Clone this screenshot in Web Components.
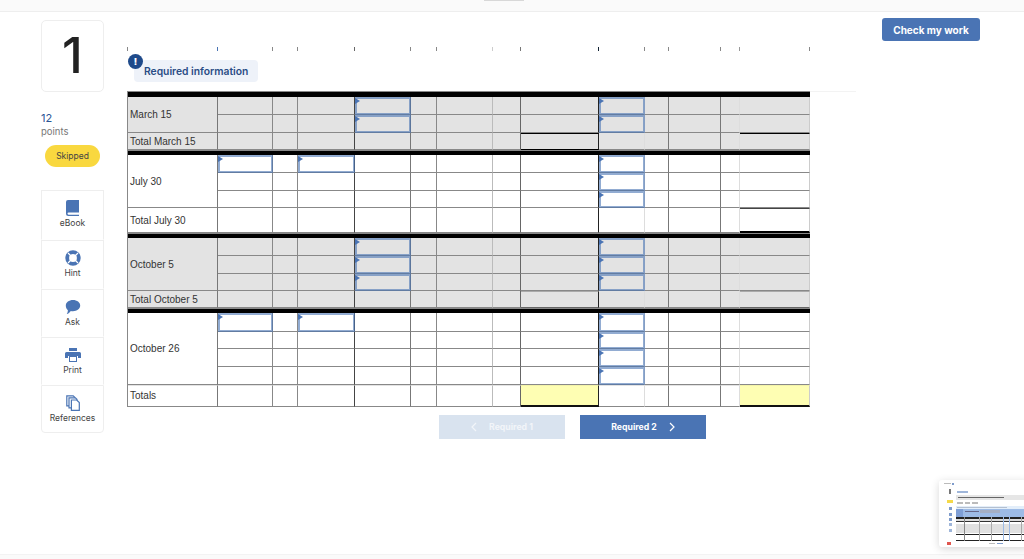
<!DOCTYPE html>
<html>
<head>
<meta charset="utf-8">
<style>
  html, body { margin: 0; height: 559px; overflow: hidden; background: #fff; }
  body { font-family: "Inter", "Liberation Sans", sans-serif; position: relative; }
  .main { display: flex; padding-left: 41px; align-items: flex-start; height: 542px; }
</style>
</head>
<body>
<top-bar></top-bar>
<div class="main">
  <side-rail number="1" points="12">
    <tool-button label="eBook" style="height:50px"><svg viewBox="0 0 14 16" width="14" height="16"><path d="M2 0h11v12.500H2.600a1.100 1.100 0 0 0 0 2.200H13V16H2.500A2.500 2.500 0 0 1 0 13.500V2a2 2 0 0 1 2-2z" fill="#4a74b4"/></svg></tool-button>
    <tool-button label="Hint"><svg viewBox="0 0 16 16" width="16" height="16"><circle cx="8" cy="8" r="5.800" fill="none" stroke="#4a74b4" stroke-width="3.800"/><path d="M3 3l3 3M13 3l-3 3M3 13l3-3M13 13l-3-3" stroke="#fff" stroke-width="1.200"/></svg></tool-button>
    <tool-button label="Ask" style="height:48px"><svg viewBox="0 0 16 16" width="16" height="16"><path d="M8 1c4 0 7.200 2.400 7.200 5.600S12 12.200 8 12.200c-.8 0-1.500-.1-2.200-.3C4.800 13.400 3.300 14.600 1.800 15c.7-1 1.100-2.200 1.100-3.700C1.600 10.200.8 8.500.8 6.600.8 3.400 4 1 8 1z" fill="#4a74b4"/></svg></tool-button>
    <tool-button label="Print" style="height:48px"><svg viewBox="0 0 16 14" width="16" height="14"><path d="M4 0h8v3H4zM1.500 4h13A1.500 1.500 0 0 1 16 5.500V10h-3V8H3v2H0V5.500A1.500 1.500 0 0 1 1.500 4z" fill="#4a74b4"/><path d="M4 8h8v6H4z" fill="#4a74b4"/><path d="M5 9h6v4H5z" fill="#fff"/></svg></tool-button>
    <tool-button label="References" last><svg viewBox="0 0 14 16" width="14" height="16" fill="#fff" stroke="#4a74b4" stroke-width="1.200"><path d="M.8.800h6.400l1.500 1.500v8.500H.8z"/><path d="M3 2.800h6.400l1.500 1.500v8.500H3z"/><path d="M5.400 5h5.300l2.600 2.600v7.800H5.400z"/></svg></tool-button>
  </side-rail>
  <section-body></section-body>
  <check-button>Check my work</check-button>
</div>
<bottom-bar></bottom-bar>
<mini-preview></mini-preview>
<script>
// column widths and row heights of the worksheet, top to bottom
const COLS = [90, 55, 25, 57, 56, 26, 56, 28, 78, 46, 24, 52, 19, 70];
const LINE = ['#777', '#888', '#888', '#444', '#777', '#888', '#bbb', '#666', '#222', '#ddd', '#777', '#777', '#ddd', '#ccc'];
const TICK = ['#888', '#4a74b4', '#888', '#888', '#666', '#888', '#888', '#ccc', '#777', '#123', '#888', '#888', '#888', '#999', '#888'];

const BLOCKS = [
  { label: 'March 15', total: 'Total March 15', grey: true, heights: [18, 18], totalH: 17,
    inputs: [[4, 9], [4, 9]] },
  { label: 'July 30', total: 'Total July 30', grey: false, heights: [18, 18, 17], totalH: 25,
    inputs: [[1, 3, 9], [9], [9]] },
  { label: 'October 5', total: 'Total October 5', grey: true, heights: [18, 18, 17], totalH: 17,
    inputs: [[4, 9], [4, 9], [4, 9]] },
  { label: 'October 26', total: null, grey: false, heights: [19, 17, 18, 18], totalH: 0,
    inputs: [[1, 3, 9], [9], [9], [9]] }
];

class TopBar extends HTMLElement {
  constructor() {
    super();
    this.attachShadow({mode: 'open'});
    this.shadowRoot.innerHTML = `
    <style>
      :host { display: block; height: 11px; background: #fafafa; border-bottom: 1px solid #eee; position: relative; }
      i { display: block; width: 40px; height: 1px; margin: 0 auto; position: relative; left: -8px; background: #d8d8d8; }
    </style>
    <i></i>`;
  }
}

class BottomBar extends HTMLElement {
  constructor() {
    super();
    this.attachShadow({mode: 'open'});
    this.shadowRoot.innerHTML = `
    <style>
      :host { display: block; height: 4px; background: #fafafa; border-top: 1px solid #f3f3f3; }
    </style>`;
  }
}

class SideRail extends HTMLElement {
  constructor() {
    super();
    this.attachShadow({mode: 'open'});
    this.shadowRoot.innerHTML = `
    <style>
      :host { display: block; width: 63px; margin-right: 23px; padding-top: 8px; flex: none; }
      .num { box-sizing: border-box; height: 72px; border: 1px solid #eee; border-radius: 5px; padding-bottom: 3px;
        display: flex; align-items: center; justify-content: center;
        font: 500 50px "Inter", "Liberation Sans", sans-serif; color: #222; }
      .pts { margin-top: 20px; font-size: 11px; line-height: 13px; color: #2a5594; }
      .lbl { font-size: 9.500px; line-height: 13px; color: #777; }
      .skip { width: 55px; height: 22px; margin: 7px 0 23px 4px; border-radius: 11px; background: #f9d83f;
        font-size: 8.500px; color: #444; display: flex; align-items: center; justify-content: center; }
    </style>
    <div class="num"></div>
    <div class="pts"></div>
    <div class="lbl">points</div>
    <div class="skip">Skipped</div>
    <slot></slot>`;
    this.shadowRoot.querySelector('.num').textContent = this.getAttribute('number');
    this.shadowRoot.querySelector('.pts').textContent = this.getAttribute('points');
  }
}

class ToolButton extends HTMLElement {
  constructor() {
    super();
    this.attachShadow({mode: 'open'});
    this.shadowRoot.innerHTML = `
    <style>
      :host { display: block; box-sizing: border-box; height: 49px; border: 1px solid #eee; border-bottom-color: #fff;
        color: #444; font-size: 8.500px; text-align: center; }
      :host([last]) { height: 48px; border-bottom-color: #eee; border-radius: 0 0 4px 4px; }
      .ic { height: 16px; padding-top: 9px; display: flex; align-items: center; justify-content: center; }
      .tx { line-height: 12px; margin-top: 1px; }
    </style>
    <div class="ic"><slot></slot></div>
    <div class="tx"></div>`;
    this.shadowRoot.querySelector('.tx').textContent = this.getAttribute('label');
  }
}

class RequiredBadge extends HTMLElement {
  constructor() {
    super();
    this.attachShadow({mode: 'open'});
    this.shadowRoot.innerHTML = `
    <style>
      :host { display: block; position: relative; box-sizing: border-box; width: 124px; height: 22px; margin-left: 7px;
        background: #eef2f9; border-radius: 4px; padding-left: 10px;
        color: #2a4d85; font-size: 10.300px; font-weight: 600; line-height: 23px; white-space: nowrap; }
      b { position: absolute; left: -6px; top: -6px; width: 15px; height: 15px; border-radius: 50%;
        background: #1f4a8a; color: #fff; font-size: 9px; line-height: 15px; text-align: center; }
    </style>
    <b>!</b><slot></slot>`;
  }
}

class LedgerTable extends HTMLElement {
  constructor() {
    super();
    this.attachShadow({mode: 'open'});
    this.shadowRoot.innerHTML = `
    <style>
      :host { display: block; font: 10px "Liberation Sans", Arial, sans-serif; color: #333; }
      .grid { display: grid; width: 683px; border-left: 1px solid #888; box-sizing: border-box; }
      .bar { grid-column: 1 / -1; background: #000; border-top: 1px solid #888; box-sizing: border-box; }
      .c { box-sizing: border-box; border-right: 1px solid #777; border-bottom: 1px solid #888; position: relative; min-width: 0; }
      .grey { background: #e3e3e3; }
      .lab { display: flex; align-items: center; padding-left: 2px; white-space: nowrap; }
      .in::after { content: ""; position: absolute; inset: 0 -1px -1px 0; border: 2px solid rgba(74, 116, 180, .6); }
      .in::before { content: ""; position: absolute; left: 0; top: 1px; border: 3px solid transparent; border-left: 5px solid #4a74b4; border-right: 0; z-index: 1; }
      .yel { background: #fefeb3; border-bottom: 2px solid #111; }
    </style>
    <div class="grid"></div>`;
    this.build();
  }

  build() {
    const grid = this.shadowRoot.querySelector('.grid');
    const rows = [6];
    const add = (cls, style, text) => {
      const el = document.createElement('div');
      el.className = cls;
      el.style.cssText = style;
      if (text) el.textContent = text;
      grid.appendChild(el);
      return el;
    };
    let r = 1;
    add('bar', `grid-row:${r}`);
    r++;
    BLOCKS.forEach((block, bi) => {
      const tone = block.grey ? ' grey' : '';
      add('c lab' + tone, `grid-row:${r}/span ${block.heights.length};grid-column:1`, block.label);
      block.heights.forEach((h, i) => {
        rows.push(h);
        COLS.forEach((_, col) => {
          if (col === 0) return;
          const input = block.inputs[i].includes(col);
          add('c' + tone + (input ? ' in' : ''), `grid-row:${r};grid-column:${col + 1};border-right-color:${LINE[col]}`);
        });
        r++;
      });
      if (block.total) {
        rows.push(block.totalH);
        add('c lab' + tone, `grid-row:${r};grid-column:1`, block.total);
        COLS.forEach((_, col) => {
          if (col === 0) return;
          let style = `grid-row:${r};grid-column:${col + 1};border-right-color:${LINE[col]}`;
          const money = col === 8 || col === 13;
          if (money && bi === 0) style += col === 8 ? ';border-top:1px solid #000;border-bottom:1px solid #000' : ';border-top:1px solid #000';
          if (col === 13 && bi === 1) style += ';border-top:1px solid #444;border-bottom:2px solid #000';
          if (money && bi === 2) style += ';border-top:1px solid #aaa;border-bottom:1px solid #666';
          add('c' + tone, style);
        });
        r++;
      }
      if (bi < BLOCKS.length - 1) {
        rows.push(5);
        add('bar', `grid-row:${r}`);
        r++;
      }
    });
    // grand total row
    rows.push(22);
    add('c lab', `grid-row:${r};grid-column:1;border-top:1px solid #e3e3e3;padding-bottom:2px`, 'Totals');
    COLS.forEach((_, col) => {
      if (col === 0) return;
      const money = col === 8 || col === 13;
      add('c' + (money ? ' yel' : ''), `grid-row:${r};grid-column:${col + 1};border-right-color:${LINE[col]};border-top:1px solid ${money ? '#f3f3a8' : '#e3e3e3'}`);
    });
    grid.style.gridTemplateColumns = COLS.map(w => w + 'px').join(' ');
    grid.style.gridTemplateRows = rows.map(h => h + 'px').join(' ');
  }
}

class TickRow extends HTMLElement {
  constructor() {
    super();
    this.attachShadow({mode: 'open'});
    this.shadowRoot.innerHTML = `
    <style>
      :host { display: flex; width: 684px; height: 4px; }
      i { display: block; box-sizing: border-box; height: 4px; border-right: 1px solid #888; }
      i:first-child { width: 1px; }
    </style>`;
    [0].concat(COLS).forEach((w, idx) => {
      const tick = document.createElement('i');
      if (idx > 0) tick.style.width = w + 'px';
      tick.style.borderRightColor = TICK[idx];
      this.shadowRoot.appendChild(tick);
    });
  }
}

class StepButton extends HTMLElement {
  constructor() {
    super();
    this.attachShadow({mode: 'open'});
    this.shadowRoot.innerHTML = `
    <style>
      :host { display: flex; width: 126px; height: 24px; align-items: center; justify-content: center; gap: 12px;
        background: #4a74b4; color: #fff; font-size: 8.700px; font-weight: 700; white-space: nowrap; }
      :host([off]) { background: #d9e3ef; color: #f2f5f9; }
    </style>
    <slot name="before"></slot><slot></slot><slot name="after"></slot>`;
  }
}

class SectionBody extends HTMLElement {
  constructor() {
    super();
    this.attachShadow({mode: 'open'});
    this.shadowRoot.innerHTML = `
    <style>
      :host { display: block; width: 729px; padding-top: 35px; flex: none; }
      required-badge { margin-top: 9px; margin-bottom: 9px; }
      .rule { border-top: 1px solid #f3f3f3; }
      .nav { display: flex; gap: 15px; margin: 8px 0 0 312px; }
      svg { flex: none; }
    </style>
    <tick-row></tick-row>
    <required-badge>Required information</required-badge>
    <div class="rule"></div>
    <ledger-table style="margin-top:-1px"></ledger-table>
    <div class="nav">
      <step-button off><svg slot="before" width="6" height="10" viewBox="0 0 6 10" fill="none" stroke="currentColor" stroke-width="1.200"><path d="M5 1L1 5l4 4"/></svg>Required 1</step-button>
      <step-button>Required 2<svg slot="after" width="6" height="10" viewBox="0 0 6 10" fill="none" stroke="currentColor" stroke-width="1.200"><path d="M1 1l4 4-4 4"/></svg></step-button>
    </div>`;
  }
}

class CheckButton extends HTMLElement {
  constructor() {
    super();
    this.attachShadow({mode: 'open'});
    this.shadowRoot.innerHTML = `
    <style>
      :host { display: flex; width: 98px; height: 23px; margin: 6px 0 0 26px; flex: none; align-items: center; justify-content: center;
        background: #4a74b4; border-radius: 3px; color: #fff; font-size: 10px; font-weight: 700; white-space: nowrap; }
    </style>
    <slot></slot>`;
  }
}

class MiniPreview extends HTMLElement {
  constructor() {
    super();
    this.attachShadow({mode: 'open'});
    this.shadowRoot.innerHTML = `
    <style>
      :host { position: absolute; left: 939px; top: 480px; width: 90px; height: 67px; box-sizing: border-box;
        background: #fff; border-radius: 3px; box-shadow: 0 2px 9px rgba(0,0,0,.16); overflow: hidden; }
      svg { display: block; }
    </style>
    <svg width="90" height="67" viewBox="0 0 90 67">
      <defs><filter id="b" x="-5%" y="-5%" width="110%" height="110%"><feGaussianBlur stdDeviation=".6"/></filter></defs>
      <g filter="url(#b)">
        <rect x="5" y="3" width="7" height="1" fill="#bbb"/><rect x="13" y="3" width="2" height="2" fill="#7f9ccc"/>
        <rect x="10" y="9" width="2" height="5" fill="#777"/><rect x="18" y="11" width="11" height="2" fill="#9fb6da"/>
        <rect x="8" y="20" width="6" height="3" fill="#f5d94a"/>
        <rect x="10" y="27" width="3" height="3" fill="#7f9ccc"/><rect x="10" y="33" width="3" height="3" fill="#7f9ccc"/>
        <rect x="10" y="38" width="3" height="3" fill="#7f9ccc"/><rect x="10" y="43" width="3" height="3" fill="#9fb6da"/>
        <rect x="10" y="49" width="3" height="3" fill="#9fb6da"/>
        <rect x="17" y="15" width="73" height="5" fill="#e6e6e6"/><rect x="19" y="17" width="46" height="1" fill="#666"/>
        <rect x="18" y="22" width="6" height="2" fill="#bbb"/><rect x="26" y="22" width="5" height="2" fill="#bbb"/><rect x="33" y="22" width="6" height="2" fill="#bbb"/>
        <rect x="17" y="26" width="73" height="3" fill="#e3eefa"/><rect x="18" y="27" width="50" height="1" fill="#b5c0d0"/>
        <rect x="17" y="29" width="73" height="8" fill="#9dbbe6"/><rect x="17" y="29" width="7" height="8" fill="#7f9fd6"/>
        <rect x="26" y="31" width="14" height="1" fill="#668"/><rect x="41" y="30" width="20" height="3" fill="#a5afc4"/>
        <rect x="17" y="37" width="73" height="2" fill="#222"/><rect x="17" y="39" width="73" height="2" fill="#ddd"/>
        <rect x="17" y="41" width="73" height="1" fill="#333"/>
        <rect x="17" y="44" width="73" height="9" fill="#e0e0e0"/>
        <rect x="17" y="54" width="73" height="1" fill="#222"/>
        <rect x="17" y="60" width="73" height="1" fill="#222"/>
        <rect x="25" y="37" width="1" height="24" fill="#888"/><rect x="40" y="37" width="1" height="24" fill="#aaa"/>
        <rect x="52" y="37" width="1" height="24" fill="#aaa"/><rect x="64" y="37" width="1" height="24" fill="#9dbbe6"/>
        <rect x="70" y="37" width="1" height="24" fill="#9dbbe6"/><rect x="82" y="37" width="1" height="24" fill="#aaa"/>
        <rect x="8" y="62" width="4" height="3" fill="#e0564f"/>
        <rect x="50" y="63" width="6" height="1" fill="#bbb"/><rect x="58" y="63" width="6" height="1" fill="#7f9ccc"/>
      </g>
    </svg>`;
  }
}

customElements.define('top-bar', TopBar);
customElements.define('bottom-bar', BottomBar);
customElements.define('side-rail', SideRail);
customElements.define('tool-button', ToolButton);
customElements.define('required-badge', RequiredBadge);
customElements.define('ledger-table', LedgerTable);
customElements.define('tick-row', TickRow);
customElements.define('step-button', StepButton);
customElements.define('section-body', SectionBody);
customElements.define('check-button', CheckButton);
customElements.define('mini-preview', MiniPreview);
</script>
</body>
</html>
